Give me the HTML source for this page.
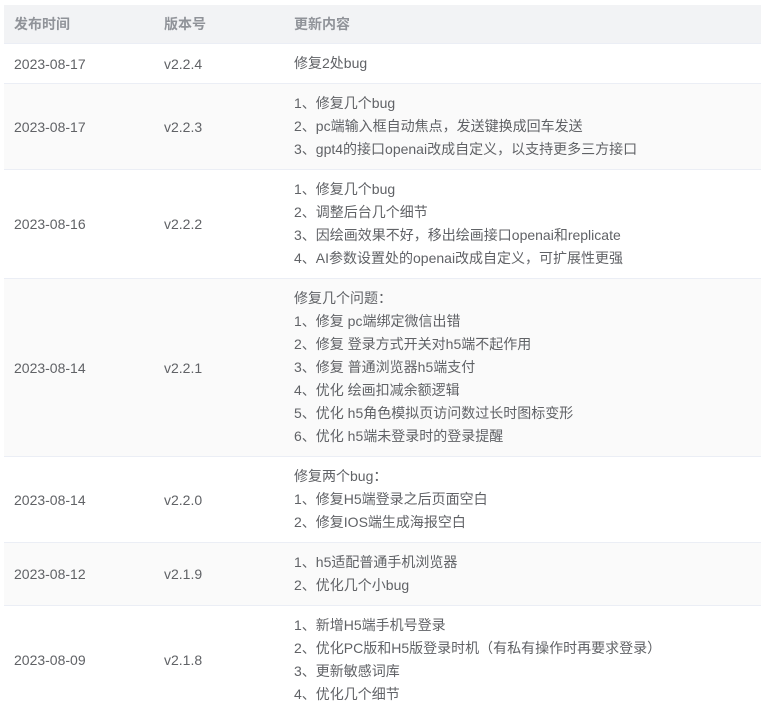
<!DOCTYPE html>
<html><head><meta charset="utf-8"><style>
*{margin:0;padding:0;box-sizing:border-box}
body{width:761px;height:711px;overflow:hidden;background:#fff;font-family:"Liberation Sans","Noto Sans CJK SC",sans-serif;font-size:14px;color:#606266}
.r{position:absolute;left:4px;width:760px;border-bottom:1px solid #ebeef5;display:flex;align-items:center}
.r.s{background:#fafafa}
.h{background:#f2f3f5;color:#909399;font-weight:bold}
.c1{position:absolute;left:10px}
.c2{position:absolute;left:160px}
.c3{position:absolute;left:290px;line-height:23px;font-family:"Noto Sans CJK SC","Liberation Sans",sans-serif;font-family:"Liberation Sans","Noto Sans CJK SC",sans-serif}
</style></head><body>
<div class="r h" style="top:5px;height:39px"><span class="c1">发布时间</span><span class="c2">版本号</span><span class="c3">更新内容</span></div>
<div class="r" style="top:44px;height:40px"><span class="c1">2023-08-17</span><span class="c2">v2.2.4</span><span class="c3">修复2处bug</span></div>
<div class="r s" style="top:84px;height:86px"><span class="c1">2023-08-17</span><span class="c2">v2.2.3</span><span class="c3">1、修复几个bug<br>2、pc端输入框自动焦点，发送键换成回车发送<br>3、gpt4的接口openai改成自定义，以支持更多三方接口</span></div>
<div class="r" style="top:170px;height:109px"><span class="c1">2023-08-16</span><span class="c2">v2.2.2</span><span class="c3">1、修复几个bug<br>2、调整后台几个细节<br>3、因绘画效果不好，移出绘画接口openai和replicate<br>4、AI参数设置处的openai改成自定义，可扩展性更强</span></div>
<div class="r s" style="top:279px;height:178px"><span class="c1">2023-08-14</span><span class="c2">v2.2.1</span><span class="c3">修复几个问题：<br>1、修复 pc端绑定微信出错<br>2、修复 登录方式开关对h5端不起作用<br>3、修复 普通浏览器h5端支付<br>4、优化 绘画扣减余额逻辑<br>5、优化 h5角色模拟页访问数过长时图标变形<br>6、优化 h5端未登录时的登录提醒</span></div>
<div class="r" style="top:457px;height:86px"><span class="c1">2023-08-14</span><span class="c2">v2.2.0</span><span class="c3">修复两个bug：<br>1、修复H5端登录之后页面空白<br>2、修复IOS端生成海报空白</span></div>
<div class="r s" style="top:543px;height:63px"><span class="c1">2023-08-12</span><span class="c2">v2.1.9</span><span class="c3">1、h5适配普通手机浏览器<br>2、优化几个小bug</span></div>
<div class="r" style="top:606px;height:108px;border-bottom:none"><span class="c1">2023-08-09</span><span class="c2">v2.1.8</span><span class="c3">1、新增H5端手机号登录<br>2、优化PC版和H5版登录时机（有私有操作时再要求登录）<br>3、更新敏感词库<br>4、优化几个细节</span></div>
</body></html>
